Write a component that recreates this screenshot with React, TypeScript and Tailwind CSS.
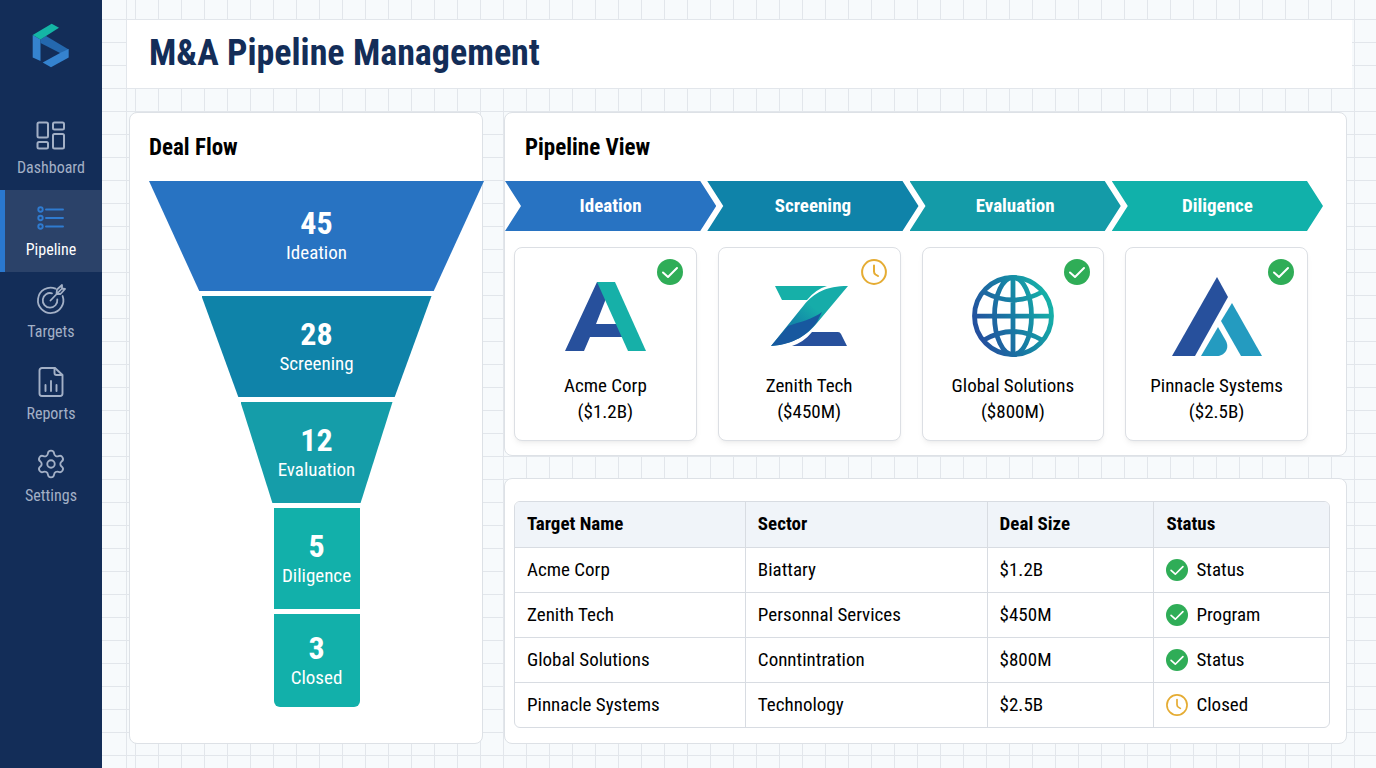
import { useId } from "react";

type Status = "done" | "pending";

const stages = [
  { count: 45, label: "Ideation", box: "h-[110px] w-full bg-[#2873c2] [clip-path:polygon(0_0,100%_0,85%_100%,15%_100%)]" },
  { count: 28, label: "Screening", box: "h-[101px] w-[230px] bg-[#0f83a9] [clip-path:polygon(0_0,100%_0,84%_100%,16%_100%)]" },
  { count: 12, label: "Evaluation", box: "h-[101px] w-[152px] bg-[#159da9] [clip-path:polygon(0_0,100%_0,79%_100%,21%_100%)]" },
  { count: 5, label: "Diligence", box: "h-[101px] w-[86px] bg-[#12b0aa]" },
  { count: 3, label: "Closed", box: "h-[93px] w-[86px] rounded-b-md bg-[#12b0aa]" },
];

const steps = [
  { label: "Ideation", box: "bg-[#2873c2]" },
  { label: "Screening", box: "-ml-[9px] bg-[#0f83a9]" },
  { label: "Evaluation", box: "-ml-[9px] bg-[#149ba8]" },
  { label: "Diligence", box: "-ml-[9px] bg-[#11b1aa]" },
];

const deals: { name: string; size: string; status: Status; Logo: () => React.JSX.Element }[] = [
  { name: "Acme Corp", size: "($1.2B)", status: "done", Logo: AcmeLogo },
  { name: "Zenith Tech", size: "($450M)", status: "pending", Logo: ZenithLogo },
  { name: "Global Solutions", size: "($800M)", status: "done", Logo: GlobalLogo },
  { name: "Pinnacle Systems", size: "($2.5B)", status: "done", Logo: PinnacleLogo },
];

const rows: { name: string; sector: string; size: string; status: Status; label: string }[] = [
  { name: "Acme Corp", sector: "Biattary", size: "$1.2B", status: "done", label: "Status" },
  { name: "Zenith Tech", sector: "Personnal Services", size: "$450M", status: "done", label: "Program" },
  { name: "Global Solutions", sector: "Conntintration", size: "$800M", status: "done", label: "Status" },
  { name: "Pinnacle Systems", sector: "Technology", size: "$2.5B", status: "pending", label: "Closed" },
];

function BrandMark() {
  return (
    <svg viewBox="0 0 38 45" className="h-[45px] w-[38px]" aria-hidden="true">
      <path d="M.7 12 8.500 16.500V38L.7 34.500z" fill="#3583cf" />
      <path d="M8.500 16.500 14 13l22.700 13.500-7.700 4L8.500 20z" fill="#2468ae" />
      <path d="M36.700 26v8.500L19 44.300 10.700 39.500 29 29.500z" fill="#3583cf" />
      <path d="M.7 12 19.700.7 27 4.700 8.500 16.500z" fill="#14b5a5" />
    </svg>
  );
}

function DashboardIcon() {
  return (
    <svg viewBox="0 0 32 32" className="size-8" fill="none" stroke="currentColor" strokeWidth="2" aria-hidden="true">
      <rect x="2.500" y="2.500" width="10.500" height="15" rx="1.500" />
      <rect x="18" y="2.500" width="11" height="7" rx="1.500" />
      <rect x="2.500" y="22" width="10.500" height="6.500" rx="1.500" />
      <rect x="18" y="14" width="11" height="14.500" rx="1.500" />
    </svg>
  );
}

function PipelineIcon() {
  return (
    <svg viewBox="0 0 32 32" className="size-8 text-[#2f7bd0]" fill="none" stroke="currentColor" strokeWidth="1.900" strokeLinecap="round" aria-hidden="true">
      {[7.5, 16, 24.5].map((y) => (
        <g key={y}>
          <circle cx="5.500" cy={y} r="2.200" />
          <path d={`M11 ${y}h17`} />
        </g>
      ))}
    </svg>
  );
}

function TargetsIcon() {
  return (
    <svg viewBox="0 0 32 32" className="size-8" fill="none" stroke="currentColor" strokeWidth="1.800" strokeLinecap="round" strokeLinejoin="round" aria-hidden="true">
      <path d="M20.500 4.600A12.700 12.700 0 1 0 27.600 12" />
      <path d="M17 9.300A7.300 7.300 0 1 0 22.300 15.500" />
      <path d="m15.500 16.500 10.500-11M21.500 10l.5-4.500L27 1v3.500L30 5l-4.500 5z" />
    </svg>
  );
}

function ReportsIcon() {
  return (
    <svg viewBox="0 0 32 32" className="size-8" fill="none" stroke="currentColor" strokeWidth="1.900" strokeLinecap="round" strokeLinejoin="round" aria-hidden="true">
      <path d="M20 2H7a2.500 2.500 0 0 0-2.500 2.500v23A2.500 2.500 0 0 0 7 30h18a2.500 2.500 0 0 0 2.500-2.500V9z" />
      <path d="M19.500 2v5a2 2 0 0 0 2 2H27M10.500 25v-6M16 25V15M21.500 25v-6" />
    </svg>
  );
}

function SettingsIcon() {
  return (
    <svg viewBox="0 0 24 24" className="size-8" fill="none" stroke="currentColor" strokeWidth="1.400" strokeLinecap="round" strokeLinejoin="round" aria-hidden="true">
      <path d="M9.671 4.136a2.340 2.340 0 0 1 4.659 0 2.340 2.340 0 0 0 3.319 1.915 2.340 2.340 0 0 1 2.330 4.033 2.340 2.340 0 0 0 0 3.831 2.340 2.340 0 0 1-2.330 4.033 2.340 2.340 0 0 0-3.319 1.915 2.340 2.340 0 0 1-4.659 0 2.340 2.340 0 0 0-3.320-1.915 2.340 2.340 0 0 1-2.330-4.033 2.340 2.340 0 0 0 0-3.831A2.340 2.340 0 0 1 6.350 6.051a2.340 2.340 0 0 0 3.319-1.915" />
      <circle cx="12" cy="12" r="2.800" />
    </svg>
  );
}

const navItems = [
  { label: "Dashboard", Icon: DashboardIcon },
  { label: "Pipeline", Icon: PipelineIcon, active: true },
  { label: "Targets", Icon: TargetsIcon },
  { label: "Reports", Icon: ReportsIcon },
  { label: "Settings", Icon: SettingsIcon },
];

function AcmeLogo() {
  return (
    <svg viewBox="0 0 81 69" className="h-[69px] w-[81px]" aria-hidden="true">
      <path d="M32 0h9l1 14-11 28h23l5 13H25l-6 14H0z" fill="#27509c" />
      <path d="M32 0h18l31 69H63z" fill="#16b0a8" />
    </svg>
  );
}

function ZenithLogo() {
  const id = useId();
  return (
    <svg viewBox="0 0 77 60" className="h-[60px] w-[77px]" aria-hidden="true">
      <defs>
        <linearGradient id={id} x1="0" y1="1" x2="1" y2="0">
          <stop offset="0.350" stopColor="#1387a8" />
          <stop offset="0.600" stopColor="#16aca9" />
        </linearGradient>
      </defs>
      <path d="M4 0h52Q45 3 36 14H11z" fill="#16b0a8" />
      <path d="M77 0C55 0 43 7 33 19L0 60C24 58 37 48 46 37z" fill={`url(#${id})`} />
      <path d="M0 60 17 40C29 36 42 33 51 26L46 36C36 49 24 58 0 60z" fill="#17589f" />
      <path d="M21 60Q33 56 41 46h26q2 0 3 2l6 12z" fill="#27509c" />
    </svg>
  );
}

function GlobalLogo() {
  const id = useId();
  return (
    <svg viewBox="0 0 82 82" className="size-[82px]" fill="none" stroke={`url(#${id})`} strokeWidth="4.800" aria-hidden="true">
      <defs>
        <linearGradient id={id} gradientUnits="userSpaceOnUse" x1="5" y1="55" x2="77" y2="27">
          <stop offset="0" stopColor="#24509e" />
          <stop offset="0.500" stopColor="#177ca4" />
          <stop offset="1" stopColor="#16b0a8" />
        </linearGradient>
      </defs>
      <circle cx="41" cy="41" r="38.500" />
      <ellipse cx="41" cy="41" rx="18.500" ry="38.500" />
      <path d="M41 2v78M2 41.100h78M12 17q29 16 58 0M12 65q29-17 58 0" />
    </svg>
  );
}

function PinnacleLogo() {
  return (
    <svg viewBox="0 0 90 79" className="h-[79px] w-[90px]" aria-hidden="true">
      <path d="M45 0 56 20 23 79H0z" fill="#27509c" />
      <path d="M60 26 90 79H69L49 44z" fill="#249bc0" />
      <path d="M46 50 54 64C58 72 52 79 45 79H29z" fill="#249bc0" />
    </svg>
  );
}

function StatusIcon({ status, className }: { status: Status; className: string }) {
  return status === "done" ? (
    <svg viewBox="0 0 26 26" className={className} fill="none" role="img" aria-label="Approved">
      <circle cx="13" cy="13" r="13" fill="#2fad57" />
      <path d="m6 13.500 5 4.500 9-9" stroke="#fff" strokeWidth="2" strokeLinecap="round" strokeLinejoin="round" />
    </svg>
  ) : (
    <svg viewBox="0 0 26 26" className={className} fill="none" stroke="#e5ac33" strokeWidth="2" role="img" aria-label="Pending">
      <circle cx="13" cy="13" r="11.900" />
      <path d="M13 6.500v6q0 2 1.500 3l2.500 1.500" strokeLinecap="round" />
    </svg>
  );
}

export default function App() {
  return (
    <div className="flex min-h-screen bg-[#f7fafc] font-['Roboto_Condensed','Roboto',sans-serif] text-black">
      <aside className="flex w-[102px] shrink-0 flex-col bg-[#132d58]">
        <a href="#home" aria-label="Home" className="flex h-[108px] justify-center pt-[23px]">
          <BrandMark />
        </a>
        <nav aria-label="Main">
          {navItems.map(({ label, Icon, active }) => (
            <a
              key={label}
              href={`#${label.toLowerCase()}`}
              aria-current={active ? "page" : undefined}
              className={
                active
                  ? "flex h-[82px] flex-col items-center border-l-[5px] border-[#2a78cf] bg-[#2b4269] pt-3 pr-[5px] text-white"
                  : "flex h-[82px] flex-col items-center pt-3 text-[#a3b0c6]"
              }
            >
              <Icon />
              <span className="mt-1 text-base leading-6">{label}</span>
            </a>
          ))}
        </nav>
      </aside>

      <div className="min-w-0 flex-1 bg-[linear-gradient(to_bottom,#e2e6eb_1px,transparent_1px),linear-gradient(to_right,#f7fafc_24px,#e2e6eb_24px),linear-gradient(to_right,#e2e6eb_1px,transparent_1px)] [background-repeat:repeat,no-repeat,repeat] bg-[size:23px_23px,25px_100%,23px_23px] bg-[position:0_19px,0_0,10px_0] pt-5 pr-6 pb-6 pl-[25px]">
        <header className="bg-white px-[22px] pt-[11px] pb-[13px]">
          <h1 className="text-4xl leading-[44px] font-bold text-[#132d58]">M&amp;A Pipeline Management</h1>
        </header>

        <main className="mt-6 grid grid-cols-[354px_minmax(0,1fr)] gap-[21px] pr-[5px] pl-0.5">
          <section className="rounded-lg border border-[#dde1e6] bg-white pl-[19px]">
            <h2 className="pt-[19px] text-[23px] leading-8 font-bold">Deal Flow</h2>
            <ol className="mt-[17px] -mr-0.5 flex flex-col items-center gap-[5px] text-white">
              {stages.map((s) => (
                <li key={s.label} className={`flex flex-col items-center justify-center pt-0.5 ${s.box}`}>
                  <span className="text-[32px] leading-8 font-bold">{s.count}</span>
                  <span className="text-[19px] leading-7">{s.label}</span>
                </li>
              ))}
            </ol>
          </section>

          <div className="flex min-w-0 flex-col gap-[22px]">
            <section className="rounded-lg border border-[#dde1e6] bg-white pb-[14px]">
              <h2 className="pt-[19px] pl-5 text-[23px] leading-8 font-bold">Pipeline View</h2>
              <ol className="mt-[17px] mr-[23px] flex text-[19px] font-bold text-white">
                {steps.map((s) => (
                  <li
                    key={s.label}
                    className={`flex h-[50px] flex-1 items-center justify-center [clip-path:polygon(0_0,calc(100%-16px)_0,100%_50%,calc(100%-16px)_100%,0_100%,16px_50%)] ${s.box}`}
                  >
                    {s.label}
                  </li>
                ))}
              </ol>
              <ul className="mt-4 mr-[38px] ml-[9px] grid grid-cols-4 gap-[21px]">
                {deals.map(({ name, size, status, Logo }) => (
                  <li key={name} className="relative flex h-[194px] flex-col items-center rounded-lg border border-[#dcdfe4] bg-white shadow-md shadow-black/5">
                    <StatusIcon status={status} className="absolute top-[11px] right-[13px] size-[26px]" />
                    <div className="mt-[23px] flex h-[90px] items-center">
                      <Logo />
                    </div>
                    <p className="mt-3 text-center text-[19px] leading-[26px]">
                      {name}
                      <br />
                      {size}
                    </p>
                  </li>
                ))}
              </ul>
            </section>

            <section className="rounded-lg border border-[#dde1e6] bg-white pt-[22px] pr-4 pb-[15px] pl-[9px]">
              <div className="overflow-hidden rounded-md border border-[#d8dce2]">
                <table className="w-full table-fixed text-left text-[19px] leading-6">
                  <thead className="bg-[#f0f4f9]">
                    <tr className="h-[45px] divide-x divide-[#d8dce2]">
                      <th className="w-[28.3%] px-3">Target Name</th>
                      <th className="w-[29.7%] px-3">Sector</th>
                      <th className="w-[20.5%] px-3">Deal Size</th>
                      <th className="px-3">Status</th>
                    </tr>
                  </thead>
                  <tbody>
                    {rows.map((r) => (
                      <tr key={r.name} className="h-[45px] divide-x divide-[#d8dce2] border-t border-[#d8dce2]">
                        <td className="px-3">{r.name}</td>
                        <td className="px-3">{r.sector}</td>
                        <td className="px-3">{r.size}</td>
                        <td className="px-3">
                          <span className="flex items-center gap-2">
                            <StatusIcon status={r.status} className="size-[22px]" />
                            {r.label}
                          </span>
                        </td>
                      </tr>
                    ))}
                  </tbody>
                </table>
              </div>
            </section>
          </div>
        </main>
      </div>
    </div>
  );
}
